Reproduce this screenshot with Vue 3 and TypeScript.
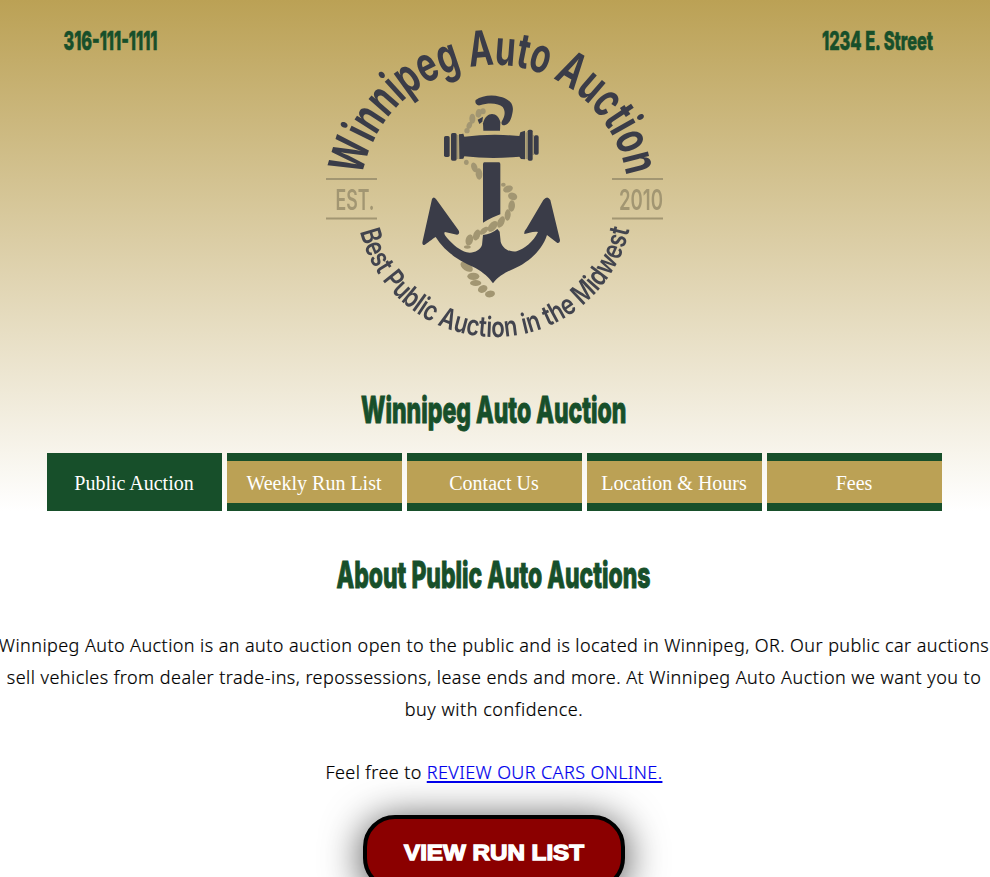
<script setup lang="ts">
interface Bead {
  x: number
  y: number
  rx: number
  ry: number
  turn: number
}

const navItems: string[] = ['Public Auction', 'Weekly Run List', 'Contact Us', 'Location & Hours', 'Fees']

const bead = (x: number, y: number, rx: number, ry: number, turn: number): Bead => ({ x, y, rx, ry, turn })

const rope: Bead[] = [
  bead(219, 79, 8, 9, 0),
  bead(206, 85, 9, 13, 10),
  bead(187, 101, 9, 15, 0),
  bead(178, 121, 8, 11, 20),
  bead(171, 137, 8, 8, 0),
  bead(169, 232, 7, 8, 0),
  bead(193, 247, 9, 15, -20),
  bead(207, 267, 10, 17, -5),
  bead(280, 299, 7, 6, 0),
  bead(294, 312, 15, 10, -20),
  bead(308, 334, 14, 11, 20),
  bead(305, 363, 10, 17, 5),
  bead(293, 390, 9, 17, 5),
  bead(273, 411, 10, 18, 25),
  bead(248, 424, 11, 19, 40),
  bead(222, 437, 8, 16, 50),
  bead(200, 450, 10, 17, 20),
  bead(178, 465, 11, 17, 15),
  bead(172, 486, 10, 5, 0),
  bead(170, 545, 21, 12, 35),
  bead(190, 574, 18, 11, 0),
  bead(197, 594, 17, 9, 0),
  bead(218, 612, 15, 11, -25),
  bead(240, 627, 15, 10, -10),
]
</script>

<template>
  <div class="page">
    <header class="header">
      <div class="masthead">
        <svg class="contact" viewBox="0 15 320 45" width="320" height="45">
          <text x="63.5" y="49.5" textLength="94" lengthAdjust="spacingAndGlyphs">316-111-1111</text>
        </svg>
        <svg class="logo" viewBox="320 15 350 335" width="350" height="335">
          <defs>
            <path id="upper-arc" d="M362.2 176.5 A134 134 0 0 1 626.4 176.5" />
            <path id="lower-arc" d="M360 231.5 A138.5 138.5 0 0 0 629.5 229.5" />
          </defs>
          <text class="arc-name">
            <textPath href="#upper-arc" textLength="375" lengthAdjust="spacingAndGlyphs">Winnipeg Auto Auction</textPath>
          </text>
          <text class="arc-tag">
            <textPath href="#lower-arc" textLength="370" lengthAdjust="spacingAndGlyphs">Best Public Auction in the Midwest</textPath>
          </text>
          <path class="rule" d="M326 179H377M326 218.5H377M612 179H663M612 218.5H663" />
          <text class="since" x="335.5" y="210" textLength="39" lengthAdjust="spacingAndGlyphs">EST.</text>
          <text class="since" x="619" y="210" textLength="44" lengthAdjust="spacingAndGlyphs">2010</text>
          <g transform="translate(410 85) scale(.33333)">
            <g class="rope">
              <ellipse
                v-for="(b, i) in rope"
                :key="i"
                :rx="b.rx"
                :ry="b.ry"
                :transform="`translate(${b.x} ${b.y}) rotate(${b.turn})`"
              />
              <path d="M141 150h5v72h-5zM346 142h6v80h-6zM368 150h4v60h-4z" />
            </g>
            <g class="anchor">
              <path d="M197 45C215 32 245 28 270 35C300 42 312 58 308 80C304 105 296 118 284 121C276 122 272 116 276 108C284 95 288 80 278 66C266 54 235 52 210 61C198 63 194 52 197 45Z" />
              <path d="M220 137L219 115C224 95 235 87 246 87C258 87 268 97 271 112L270 137Z" />
              <path d="M203 104L219 95L217 110L208 117Z" />
              <rect x="102" y="153" width="17" height="63" rx="5" />
              <rect x="123" y="144" width="17" height="83" rx="5" />
              <path d="M147 148L160 146L163 155Q245 145 328 153L331 142L345 137V223L333 222L328 215Q245 223 163 214L160 221L148 222Z" />
              <rect x="353" y="134" width="15" height="93" rx="5" />
              <rect x="372" y="151" width="14" height="58" rx="5" />
              <path d="M223 232H267Q271 232 271 238V388Q250 395 219 413V238Q219 232 223 232Z" />
              <path d="M219 450Q245 447 262 432L269 440L272 470C278 492 300 502 320 499C345 490 370 470 384 441C372 438 352 445 343 447C342 440 346 435 350 430L400 345Q412 330 421 345L450 465Q450 475 442 474L411 450C395 500 350 535 310 552C280 565 262 577 249 595C237 577 220 562 195 548C140 525 100 495 77 456C67 462 52 475 43 480C37 480 36 475 38 468L66 342Q71 333 78 342L145 435C150 442 147 449 141 449L105 441C100 445 105 452 112 460C130 480 150 497 170 502C190 506 210 497 216 480Z" />
            </g>
          </g>
        </svg>
        <svg class="contact" viewBox="670 15 320 45" width="320" height="45">
          <text x="822" y="49.5" textLength="111" lengthAdjust="spacingAndGlyphs">1234 E. Street</text>
        </svg>
      </div>
      <h1 class="title">
        <svg viewBox="0 380 990 60" width="990" height="60">
          <text x="361" y="422.5" textLength="265.5" lengthAdjust="spacingAndGlyphs">Winnipeg Auto Auction</text>
        </svg>
      </h1>
      <nav class="nav">
        <a v-for="(item, i) in navItems" :key="item" class="nav-item" :class="{ active: i === 0 }">{{ item }}</a>
      </nav>
    </header>
    <main class="main">
      <h2 class="title">
        <svg viewBox="0 545 990 60" width="990" height="60">
          <text x="337.5" y="587.8" textLength="314" lengthAdjust="spacingAndGlyphs">About Public Auto Auctions</text>
        </svg>
      </h2>
      <p class="copy">
        <span class="line one">Winnipeg Auto Auction is an auto auction open to the public and is located in Winnipeg, OR. Our public car auctions</span>
        <span class="line two">sell vehicles from dealer trade-ins, repossessions, lease ends and more. At Winnipeg Auto Auction we want you to</span>
        <span class="line three">buy with confidence.</span>
      </p>
      <p class="copy invite"><span class="line four">Feel free to <a class="link" href="#">REVIEW OUR CARS ONLINE.</a></span></p>
      <a class="button">
        <svg viewBox="0 0 254 67" width="254" height="67">
          <text x="37" y="41" textLength="180" lengthAdjust="spacingAndGlyphs">VIEW RUN LIST</text>
        </svg>
      </a>
    </main>
  </div>
</template>

<style>
html,
body {
  margin: 0;
  overflow: hidden;
  background: #fff;
}
</style>

<style scoped>
.page {
  width: 990px;
  height: 877px;
  overflow: hidden;
}
svg {
  display: block;
  overflow: visible;
}
.header {
  box-sizing: border-box;
  height: 511px;
  padding-top: 15px;
  background: linear-gradient(#bba155, #fff);
}
.masthead {
  display: grid;
  grid-template-columns: 320px 350px 320px;
}
.contact text {
  font: 800 26px Inter, sans-serif;
  fill: #174f2a;
  stroke: #174f2a;
  stroke-width: 0.6px;
}
.logo {
  filter: blur(0.5px);
}
.arc-name {
  font: 700 48.5px Inter, sans-serif;
  fill: #3a3c48;
}
.arc-tag {
  font: 600 28px Inter, sans-serif;
  fill: #42444e;
}
.since {
  font: 600 28px Inter, sans-serif;
  fill: #a29672;
}
.rule {
  stroke: #a29672;
  stroke-width: 2;
}
.rope {
  fill: #a29672;
}
.anchor {
  fill: #3a3c48;
}
.title {
  margin: 0;
}
.header .title {
  padding-top: 30px;
}
.title text {
  font: 800 36.5px Inter, sans-serif;
  fill: #174f2a;
  stroke: #174f2a;
  stroke-width: 1px;
}
.nav {
  display: flex;
  gap: 5px;
  padding: 13px 0 0 47px;
}
.nav-item {
  box-sizing: border-box;
  width: 175px;
  height: 58px;
  padding-right: 1px;
  border-top: 8px solid #174f2a;
  border-bottom: 8px solid #174f2a;
  background: #bba155;
  color: #fff;
  font: 20px/45px "Liberation Serif", serif;
  text-align: center;
}
.active {
  background: #174f2a;
}
.main {
  display: flex;
  flex-direction: column;
  align-items: center;
  padding: 34px 2px 0 0;
}
.copy {
  margin: 24px 0 0;
  color: #000;
  font: 300 18px/32px "Noto Sans", "Open Sans", sans-serif;
  text-align: center;
  -webkit-text-stroke: 0.2px currentColor;
}
.invite {
  margin-top: 31px;
}
.line {
  display: block;
  white-space: nowrap;
}
.one {
  letter-spacing: 0.425px;
}
.two {
  letter-spacing: 0.46px;
}
.three {
  letter-spacing: 0.55px;
}
.four {
  letter-spacing: 0.39px;
}
.link {
  color: #00e;
  text-decoration: underline;
  text-decoration-thickness: 2px;
  text-underline-offset: 2px;
}
.button {
  box-sizing: border-box;
  width: 262px;
  height: 75px;
  margin-top: 27px;
  border: 4px solid #000;
  border-radius: 32px;
  background: #8b0000;
  box-shadow: 0 5px 40px rgba(0, 0, 0, 0.75);
}
.button text {
  font: 700 21.5px "Liberation Sans", sans-serif;
  fill: #fff;
  stroke: #fff;
  stroke-width: 1.3px;
}
</style>
